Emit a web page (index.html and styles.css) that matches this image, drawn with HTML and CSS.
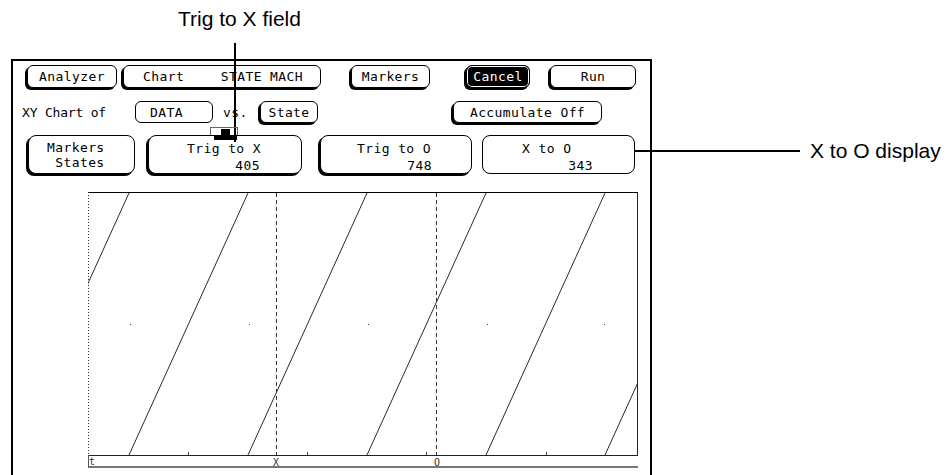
FILE: index.html
```html
<!DOCTYPE html>
<html>
<head>
<meta charset="utf-8">
<link rel="stylesheet" href="styles.css">
</head>
<body>
<div class="page">
  <div class="title">Trig to X field</div>
  <div class="frame">
    <div class="row row1">
      <div class="btn b-analyzer">Analyzer</div>
      <div class="btn b-chart"><span>Chart</span><span>STATE MACH</span></div>
      <div class="btn b-markers">Markers</div>
      <div class="btn b-cancel">Cancel</div>
      <div class="btn b-run">Run</div>
    </div>
    <div class="row row2">
      <span class="lbl">XY Chart of</span>
      <div class="field b-data">DATA</div>
      <span class="vs">vs.</span>
      <div class="btn b-state">State</div>
      <div class="btn b-accum">Accumulate Off</div>
    </div>
    <div class="row row3">
      <div class="btn tall b-mstates"><div class="ms">Markers
 States</div></div>
      <div class="btn tall b-tx"><div class="l1">Trig to X</div><div class="l2">405</div></div>
      <div class="btn tall b-to"><div class="l1">Trig to O</div><div class="l2">748</div></div>
      <div class="btn tall flat b-xo"><div class="l1">X to O</div><div class="l2">343</div></div>
    </div>
    <div class="chart">
      <svg width="550" height="280" viewBox="0 0 550 280">
        <defs>
          <clipPath id="plot"><rect x="0" y="0" width="549.5" height="263"/></clipPath>
        </defs>
        <g clip-path="url(#plot)" stroke="#2a2a2a" stroke-width="1" fill="none">
          <line x1="-78" y1="263" x2="41" y2="1"/>
          <line x1="41" y1="263" x2="160" y2="1"/>
          <line x1="160" y1="263" x2="279" y2="1"/>
          <line x1="279" y1="263" x2="398" y2="1"/>
          <line x1="398" y1="263" x2="517" y2="1"/>
          <line x1="517" y1="263" x2="636" y2="1"/>
        </g>
        <g shape-rendering="crispEdges" fill="none">
          <line x1="0" y1="0.5" x2="550" y2="0.5" stroke="#000"/>
          <line x1="549.5" y1="0" x2="549.5" y2="264" stroke="#222"/>
          <line x1="0.5" y1="0" x2="0.5" y2="264" stroke="#333" stroke-dasharray="1 2"/>
          <line x1="0" y1="263.5" x2="550" y2="263.5" stroke="#222"/>
          <line x1="188.5" y1="1" x2="188.5" y2="263" stroke="#333" stroke-dasharray="4 3"/>
          <line x1="348.5" y1="1" x2="348.5" y2="263" stroke="#333" stroke-dasharray="4 3"/>
          <line x1="100.5" y1="260" x2="100.5" y2="263" stroke="#444"/>
          <line x1="219.5" y1="260" x2="219.5" y2="263" stroke="#444"/>
          <line x1="338.5" y1="260" x2="338.5" y2="263" stroke="#444"/>
          <line x1="458.5" y1="260" x2="458.5" y2="263" stroke="#444"/>
          <line x1="0" y1="274.5" x2="550" y2="274.5" stroke="#777" stroke-width="2"/>
          <line x1="0.5" y1="263" x2="0.5" y2="275" stroke="#555"/>
        </g>
        <g fill="#444" shape-rendering="crispEdges">
          <rect x="42" y="132" width="1" height="1"/>
          <rect x="161" y="132" width="1" height="1"/>
          <rect x="280" y="132" width="1" height="1"/>
          <rect x="399" y="132" width="1" height="1"/>
          <rect x="516" y="132" width="1" height="1"/>
        </g>
        <g class="axis-lbl">
          <text x="1" y="273">t</text>
          <text x="185" y="274">X</text>
          <text x="346" y="274">O</text>
        </g>
      </svg>
    </div>
  </div>
  <div class="lead-v"></div>
  <div class="tab"><span class="tab-block"></span><span class="tab-bar"></span></div>
  <div class="callout"><span class="lead-h"></span><span class="callout-text">X to O display</span></div>
</div>
</body>
</html>
```
FILE: styles.css
```css
body {
  margin: 0;
  background: #fff;
}

.page {
  position: relative;
  width: 952px;
  height: 475px;
  overflow: hidden;
  font-family: "DejaVu Sans Mono", monospace;
  font-size: 13px;
  letter-spacing: 0.4px;
  color: #000;
}

.title {
  height: 59px;
  box-sizing: border-box;
  padding: 7px 0 0 178px;
  font-family: "Liberation Sans", Arial, sans-serif;
  font-size: 21px;
  line-height: 24px;
  letter-spacing: 0;
}

.frame {
  margin-left: 11px;
  width: 641px;
  height: 430px;
  box-sizing: border-box;
  border: 2px solid #000;
  border-bottom: none;
}

.row {
  display: flex;
  align-items: flex-start;
}

.row1 { margin-top: 4px; }
.row2 { margin-top: 13px; height: 22px; align-items: center; }
.row3 { margin-top: 12px; }

.btn {
  box-sizing: border-box;
  border: 1px solid #000;
  border-radius: 6px;
  box-shadow: -2px 2px 0 #000;
  display: flex;
  align-items: center;
  justify-content: center;
  height: 23px;
  background: #fff;
  white-space: pre;
}

.b-analyzer { margin-left: 14px; width: 90px; }
.b-chart { margin-left: 6px; width: 198px; justify-content: space-between; padding: 0 17px 0 19px; }
.b-markers { margin-left: 30px; width: 79px; }
.b-cancel {
  margin-left: 36px;
  width: 64px;
  background: #000;
  color: #fff;
  box-shadow: inset 0 0 0 1px #fff, -2px 2px 0 #000;
}
.b-run { margin-left: 20px; width: 86px; }

.lbl {
  margin-left: 9px;
  width: 113px;
  letter-spacing: -0.2px;
}

.field {
  box-sizing: border-box;
  width: 78px;
  height: 22px;
  border: 1px solid #000;
  border-radius: 6px;
  display: flex;
  align-items: center;
  padding-left: 14px;
}

.vs {
  margin-left: 10px;
  width: 37px;
}

.b-state { width: 58px; height: 22px; }
.b-accum { margin-left: 135px; width: 149px; height: 22px; }

.tall {
  height: 39px;
  border-radius: 8px;
  flex-direction: column;
  align-items: stretch;
  justify-content: flex-start;
  padding-top: 4px;
  line-height: 17px;
}

.flat { box-shadow: none; }

.b-mstates { margin-left: 15px; width: 107px; line-height: 15px; padding-left: 18px; }
.b-tx { margin-left: 13px; width: 154px; }
.b-to { margin-left: 18px; width: 152px; }
.b-xo { margin-left: 10px; width: 153px; }

.l1 { text-align: left; }
.l2 { text-align: right; }

.b-tx .l1 { padding-left: 38px; }
.b-tx .l2 { padding-right: 41px; }
.b-to .l1 { padding-left: 36px; }
.b-to .l2 { padding-right: 39px; }
.b-xo .l1 { padding-left: 39px; }
.b-xo .l2 { padding-right: 41px; }

.chart {
  margin-top: 18px;
  margin-left: 75px;
  height: 280px;
}

.chart svg { display: block; }

.axis-lbl text {
  font-family: "DejaVu Sans Mono", monospace;
  font-size: 10px;
  fill: #333;
}

.lead-v {
  position: absolute;
  left: 234px;
  top: 43px;
  width: 2px;
  height: 99px;
  background: #000;
}

.tab {
  position: absolute;
  left: 210px;
  top: 127px;
  width: 28px;
  height: 8px;
  box-sizing: border-box;
  border: 1px solid #666;
  border-bottom: none;
}

.tab-block {
  position: absolute;
  left: 10px;
  top: 1px;
  width: 9px;
  height: 8px;
  background: #000;
}

.tab-bar {
  position: absolute;
  left: 3px;
  top: 8px;
  width: 23px;
  height: 4px;
  background: #000;
}

.callout {
  position: absolute;
  left: 634px;
  top: 139px;
  display: flex;
  align-items: center;
  height: 24px;
}

.lead-h {
  width: 166px;
  height: 2px;
  background: #000;
}

.callout-text {
  margin-left: 10px;
  font-family: "Liberation Sans", Arial, sans-serif;
  font-size: 21px;
  letter-spacing: 0;
  white-space: nowrap;
}
```
